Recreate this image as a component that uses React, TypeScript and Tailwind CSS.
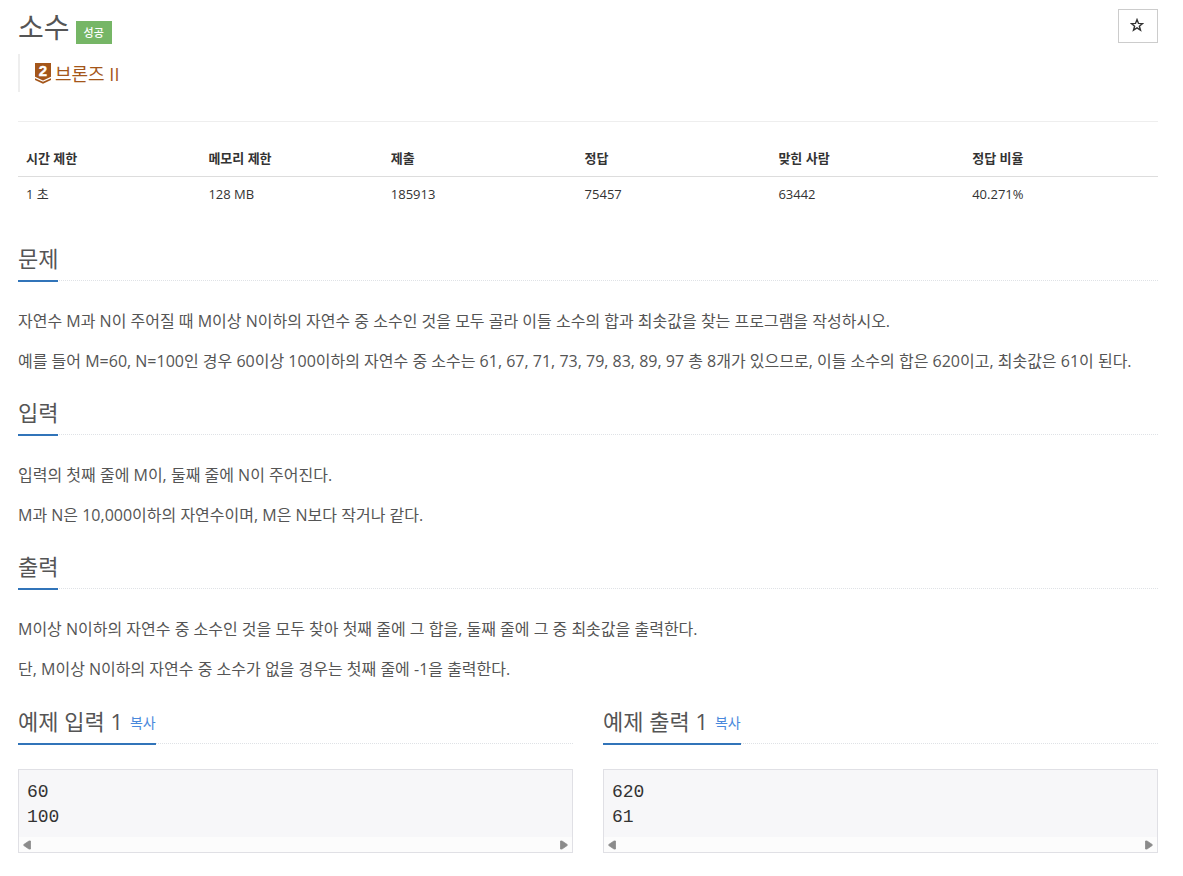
import type { ReactNode } from "react";

const stats = [
  { label: "시간 제한", value: "1 초", width: "w-[16%]" },
  { label: "메모리 제한", value: "128 MB", width: "w-[16%]" },
  { label: "제출", value: "185913", width: "w-[17%]" },
  { label: "정답", value: "75457", width: "w-[17%]" },
  { label: "맞힌 사람", value: "63442", width: "w-[17%]" },
  { label: "정답 비율", value: "40.271%", width: "w-[17%]" },
];

const sections = [
  {
    title: "문제",
    paragraphs: [
      "자연수 M과 N이 주어질 때 M이상 N이하의 자연수 중 소수인 것을 모두 골라 이들 소수의 합과 최솟값을 찾는 프로그램을 작성하시오.",
      "예를 들어 M=60, N=100인 경우 60이상 100이하의 자연수 중 소수는 61, 67, 71, 73, 79, 83, 89, 97 총 8개가 있으므로, 이들 소수의 합은 620이고, 최솟값은 61이 된다.",
    ],
  },
  {
    title: "입력",
    paragraphs: [
      "입력의 첫째 줄에 M이, 둘째 줄에 N이 주어진다.",
      "M과 N은 10,000이하의 자연수이며, M은 N보다 작거나 같다.",
    ],
  },
  {
    title: "출력",
    paragraphs: [
      "M이상 N이하의 자연수 중 소수인 것을 모두 찾아 첫째 줄에 그 합을, 둘째 줄에 그 중 최솟값을 출력한다.",
      "단, M이상 N이하의 자연수 중 소수가 없을 경우는 첫째 줄에 -1을 출력한다.",
    ],
  },
];

const samples = [
  { title: "예제 입력 1", text: "60\n100" },
  { title: "예제 출력 1", text: "620\n61" },
];

function TierBadge() {
  return (
    <svg viewBox="0 0 16 21" className="h-[21px] w-4" role="img" aria-label="브론즈 2">
      <path d="M0 0H16V13.8L8 17.4L0 13.8Z" fill="#a4561a" />
      <path d="M0 15.2L8 18.8L16 15.2V17L8 20.8L0 17Z" fill="#a4561a" />
      <text
        x="8"
        y="13"
        textAnchor="middle"
        fill="#fff"
        stroke="#fff"
        strokeWidth="0.4"
        className="font-['Liberation_Sans',sans-serif] text-[15px] font-bold"
      >
        2
      </text>
    </svg>
  );
}

function Headline({ children }: { children: ReactNode }) {
  return (
    <div className="flex border-b border-dotted border-[#dfe2e6]">
      <h2 className="-mb-0.5 border-b-2 border-[#3174b9] pb-[6px] text-[22px] leading-8 text-[#555]">
        {children}
      </h2>
    </div>
  );
}

function ScrollTrack() {
  return (
    <div className="flex h-[15px] items-center justify-between bg-[#fcfcfc] px-1" aria-hidden="true">
      <svg viewBox="0 0 8 10" className="h-[10px] w-2">
        <path d="M7.5 1V9L6 9L0.8 5.5V4.5L6 1Z" fill="#8b8b8b" stroke="#8b8b8b" strokeWidth="0.8" strokeLinejoin="round" />
      </svg>
      <svg viewBox="0 0 8 10" className="h-[10px] w-2">
        <path d="M0.5 1V9L2 9L7.2 5.5V4.5L2 1Z" fill="#8b8b8b" stroke="#8b8b8b" strokeWidth="0.8" strokeLinejoin="round" />
      </svg>
    </div>
  );
}

export default function App() {
  return (
    <main className="bg-white pr-[25px] pb-6 pl-[18px] pt-[9px] font-['Open_Sans','Noto_Sans_CJK_KR',sans-serif] text-[#555]">
      <header>
        <div className="flex items-start justify-between">
          <div className="flex items-end gap-[6px]">
            <h1 className="text-[28px] leading-9">소수</h1>
            <span className="mb-px bg-[#76b666] px-2 text-[11px] leading-[23px] font-medium text-white">성공</span>
          </div>
          <button
            type="button"
            aria-label="즐겨찾기"
            className="flex h-[34px] w-10 items-center justify-center border border-[#ccc] bg-white pr-0.5 pb-0.5 text-[#333]"
          >
            <svg viewBox="0 0 14 14" className="size-[14px]">
              <path
                d="M7 1.6L8.5 5.4L12.6 5.6L9.4 8.2L10.5 12.2L7 9.9L3.5 12.2L4.6 8.2L1.4 5.6L5.5 5.4Z"
                fill="none"
                stroke="currentColor"
                strokeWidth="1.4"
              />
            </svg>
          </button>
        </div>
        <blockquote className="mt-[9px] flex h-[38px] items-center gap-1 border-l-2 border-[#eee] pt-px pl-[15px] text-lg text-[#a4561a]">
          <TierBadge />
          <span>브론즈 II</span>
        </blockquote>
      </header>

      <hr className="mt-[29px] border-[#eee]" />

      <table className="mt-[19px] w-full table-fixed text-left text-[13px] leading-[19px] text-[#333]">
        <thead>
          <tr className="border-b border-[#ddd]">
            {stats.map((s) => (
              <th key={s.label} className={`${s.width} p-2 font-bold`}>
                {s.label}
              </th>
            ))}
          </tr>
        </thead>
        <tbody>
          <tr>
            {stats.map((s) => (
              <td key={s.label} className="p-2">
                {s.value}
              </td>
            ))}
          </tr>
        </tbody>
      </table>

      <div className="mt-[30px] flex flex-col gap-5">
        {sections.map((s) => (
          <section key={s.title}>
            <Headline>{s.title}</Headline>
            <div className="mt-[25px] flex flex-col gap-[10px] text-base leading-[30px]">
              {s.paragraphs.map((p) => (
                <p key={p}>{p}</p>
              ))}
            </div>
          </section>
        ))}

        <div className="grid grid-cols-2 gap-[30px] pt-px">
          {samples.map((s) => (
            <section key={s.title}>
              <Headline>
                {s.title}
                <button type="button" className="ml-[7px] align-[2px] text-sm leading-5 text-[#4a89dc]">
                  복사
                </button>
              </Headline>
              <div className="mt-[25px] border border-[#e0e0e5] bg-[#f7f7f9]">
                <pre className="px-2 pt-[10px] pb-[7px] font-['Liberation_Mono',monospace] text-[18px] leading-[25px] text-[#333]">
                  {s.text}
                </pre>
                <ScrollTrack />
              </div>
            </section>
          ))}
        </div>
      </div>
    </main>
  );
}
